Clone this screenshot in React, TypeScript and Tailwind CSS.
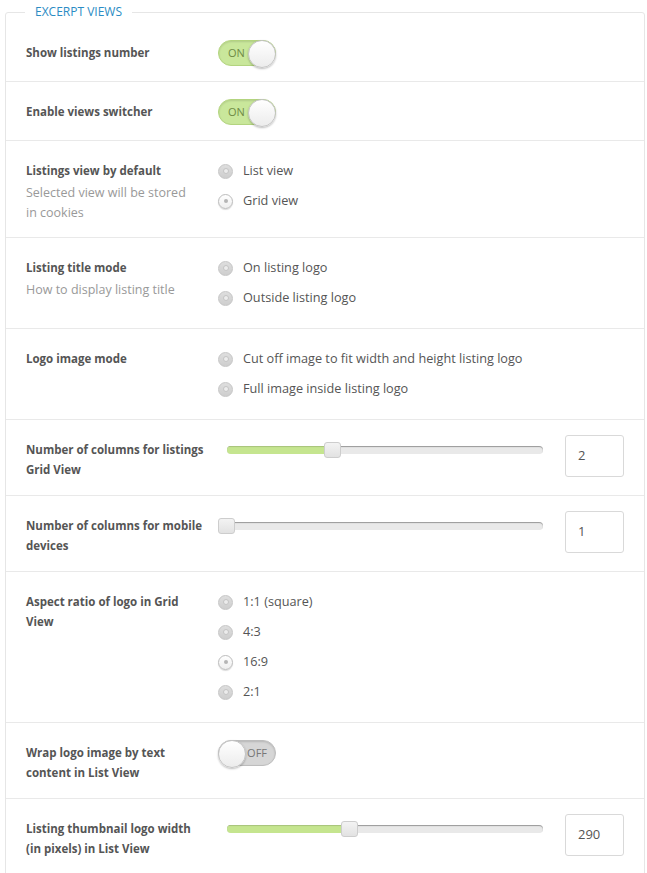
import React from "react";

const FONT = { fontFamily: '"Open Sans", "Noto Sans", Arial, sans-serif' };

const Toggle = ({ on }: { on: boolean }) => (
  <div className="relative -mt-[4px] w-[58px] h-[27px]">
    <div
      className={
        on
          ? "w-[58px] h-[26px] mt-[1px] rounded-full bg-[#c9e79b] border border-[#b3d47f] shadow-[inset_0_1px_2px_rgba(0,0,0,0.12)] flex items-center pl-[9px] text-[11px] text-[#6f8a45]"
          : "w-[58px] h-[26px] mt-[1px] rounded-full bg-[#d6d6d6] border border-[#bdbdbd] shadow-[inset_0_1px_2px_rgba(0,0,0,0.15)] flex items-center justify-end pr-[8px] text-[11px] text-[#777]"
      }
    >
      {on ? "ON" : "OFF"}
    </div>
    <div
      className={
        "absolute top-0 w-[28px] h-[28px] rounded-full border border-[#c4c4c4] bg-gradient-to-b from-white to-[#ececec] shadow-[0_1px_2px_rgba(0,0,0,0.25)] " +
        (on ? "left-[30px]" : "left-0")
      }
    />
  </div>
);

const Radio = ({ label, checked }: { label: string; checked?: boolean }) => (
  <div className="flex items-center h-[20px] gap-[10px]">
    <div
      className={
        checked
          ? "w-[15px] h-[15px] rounded-full border border-[#bcbcbc] bg-gradient-to-b from-white to-[#eeeeee] shadow-[0_1px_1px_rgba(0,0,0,0.15)] flex items-center justify-center"
          : "w-[15px] h-[15px] rounded-full border border-[#c6c6c6] bg-gradient-to-b from-[#dedede] to-[#cecece] flex items-center justify-center"
      }
    >
      <div className={checked ? "w-[4px] h-[4px] rounded-full bg-[#b5b5b5]" : "w-[6px] h-[6px] rounded-full bg-[#ececec] border border-[#c4c4c4]"} />
    </div>
    <span className="text-[12.7px] text-[#555]">{label}</span>
  </div>
);

const Slider = ({ pct, value }: { pct: number; value: string }) => (
  <div className="flex items-start">
    <div className="ml-[9px] relative w-[316px] h-[20px] flex items-center">
      <div className="relative w-full h-[8px] rounded-full bg-[#e9e9e9] shadow-[inset_0_1px_1px_rgba(0,0,0,0.35)] overflow-hidden">
        <div className="absolute left-0 top-0 h-full bg-[#c5e58f] shadow-[inset_0_1px_1px_rgba(0,0,0,0.15)]" style={{ width: `${pct}%` }} />
      </div>
      <div
        className="absolute top-[2px] -ml-[9px] w-[17px] h-[16px] rounded-[3px] border border-[#cdcdcd] bg-gradient-to-b from-[#f3f3f3] to-[#e2e2e2]"
        style={{ left: `${pct}%` }}
      />
    </div>
    <div className="ml-[22px] -mt-[5px] w-[59px] h-[42px] rounded-[3px] border border-[#d9d9d9] flex items-center pl-[12px] text-[13px] text-[#555]">
      {value}
    </div>
  </div>
);

const Row = ({ h, label, desc, last, children }: { h: string; label: React.ReactNode; desc?: React.ReactNode; last?: boolean; children: React.ReactNode }) => (
  <div className={`flex pt-[20px] pl-[20px] ${h} ${last ? "" : "border-b border-[#e9e9e9]"}`}>
    <div className="w-[192px] shrink-0">
      <div className="text-[11.5px] leading-[20px] font-bold text-[#555]">{label}</div>
      {desc && <div className="mt-[2px] text-[12.5px] leading-[20px] text-[#999]">{desc}</div>}
    </div>
    <div>{children}</div>
  </div>
);

export default function App() {
  return (
    <div className="w-[647px] h-[873px] overflow-hidden bg-white pt-[1px]" style={FONT}>
      <fieldset className="ml-[5px] w-[640px] border border-[#e6e6e6] rounded-[3px]">
        <legend className="ml-[19px] px-[10px] text-[12px] leading-[22px] text-[#2b8cc4] uppercase">Excerpt views</legend>
        <Row h="h-[59px]" label="Show listings number">
          <Toggle on />
        </Row>
        <Row h="h-[59px]" label="Enable views switcher">
          <Toggle on />
        </Row>
        <Row h="h-[97px]" label="Listings view by default" desc={<>Selected view will be stored<br />in cookies</>}>
          <div className="flex flex-col gap-[10px]">
            <Radio label="List view" />
            <Radio label="Grid view" checked />
          </div>
        </Row>
        <Row h="h-[91px]" label="Listing title mode" desc="How to display listing title">
          <div className="flex flex-col gap-[10px]">
            <Radio label="On listing logo" />
            <Radio label="Outside listing logo" />
          </div>
        </Row>
        <Row h="h-[91px]" label="Logo image mode">
          <div className="flex flex-col gap-[10px]">
            <Radio label="Cut off image to fit width and height listing logo" />
            <Radio label="Full image inside listing logo" />
          </div>
        </Row>
        <Row h="h-[76px]" label={<>Number of columns for listings<br />Grid View</>}>
          <Slider pct={33.5} value="2" />
        </Row>
        <Row h="h-[76px]" label={<>Number of columns for mobile<br />devices</>}>
          <Slider pct={0} value="1" />
        </Row>
        <Row h="h-[151px]" label={<>Aspect ratio of logo in Grid<br />View</>}>
          <div className="flex flex-col gap-[10px]">
            <Radio label="1:1 (square)" />
            <Radio label="4:3" />
            <Radio label="16:9" checked />
            <Radio label="2:1" />
          </div>
        </Row>
        <Row h="h-[76px]" label={<>Wrap logo image by text<br />content in List View</>}>
          <Toggle on={false} />
        </Row>
        <Row h="h-[80px]" last label={<>Listing thumbnail logo width<br />(in pixels) in List View</>}>
          <Slider pct={38.8} value="290" />
        </Row>
      </fieldset>
    </div>
  );
}
